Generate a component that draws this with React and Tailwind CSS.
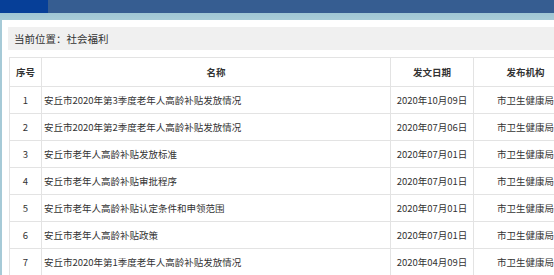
const rows = [
  ['1', '安丘市2020年第3季度老年人高龄补贴发放情况', '2020年10月09日', '市卫生健康局'],
  ['2', '安丘市2020年第2季度老年人高龄补贴发放情况', '2020年07月06日', '市卫生健康局'],
  ['3', '安丘市老年人高龄补贴发放标准', '2020年07月01日', '市卫生健康局'],
  ['4', '安丘市老年人高龄补贴审批程序', '2020年07月01日', '市卫生健康局'],
  ['5', '安丘市老年人高龄补贴认定条件和申领范围', '2020年07月01日', '市卫生健康局'],
  ['6', '安丘市老年人高龄补贴政策', '2020年07月01日', '市卫生健康局'],
  ['7', '安丘市2020年第1季度老年人高龄补贴发放情况', '2020年04月09日', '市卫生健康局'],
];

export default function App() {
  return (
    <div className="w-[554px] h-[275px] overflow-hidden bg-[#a6cad7] font-['Microsoft_YaHei','Noto_Sans_CJK_SC',sans-serif] text-[9.5px] text-[#333]">
      {/* Top bar */}
      <div className="flex h-[13px] bg-[#365d91]">
        <div className="w-[48px] bg-[#063f98]" />
      </div>
      <div className="h-[7px] bg-gradient-to-b from-[#9fc6d4] to-[#a8ccd8]" />

      {/* Content panel */}
      <div className="ml-[2px] w-[620px] h-[300px] bg-white pt-[7px] pl-[6px]">
        <div className="h-[23px] bg-[#f0f0f0] flex items-center pl-[6px] text-[10.5px] text-[#333]">
          当前位置：社会福利
        </div>

        <table className="mt-[7px] ml-[1px] border-collapse table-fixed w-[568px]">
          <colgroup>
            <col className="w-[32px]" />
            <col className="w-[349px]" />
            <col className="w-[83px]" />
            <col className="w-[104px]" />
          </colgroup>
          <thead>
            <tr className="h-[29px]">
              <th className="border border-[#e3e3e3] font-bold text-center p-0">序号</th>
              <th className="border border-[#e3e3e3] font-bold text-center p-0">名称</th>
              <th className="border border-[#e3e3e3] font-bold text-center p-0">发文日期</th>
              <th className="border border-[#e3e3e3] font-bold text-center p-0">发布机构</th>
            </tr>
          </thead>
          <tbody>
            {rows.map((r) => (
              <tr key={r[0]} className="h-[27px]">
                <td className="border border-[#e3e3e3] text-center p-0">{r[0]}</td>
                <td className="border border-[#e3e3e3] text-left pl-[2px] p-0 whitespace-nowrap">{r[1]}</td>
                <td className="border border-[#e3e3e3] text-center p-0 whitespace-nowrap">{r[2]}</td>
                <td className="border border-[#e3e3e3] text-center p-0 whitespace-nowrap">{r[3]}</td>
              </tr>
            ))}
          </tbody>
        </table>
      </div>
    </div>
  );
}
